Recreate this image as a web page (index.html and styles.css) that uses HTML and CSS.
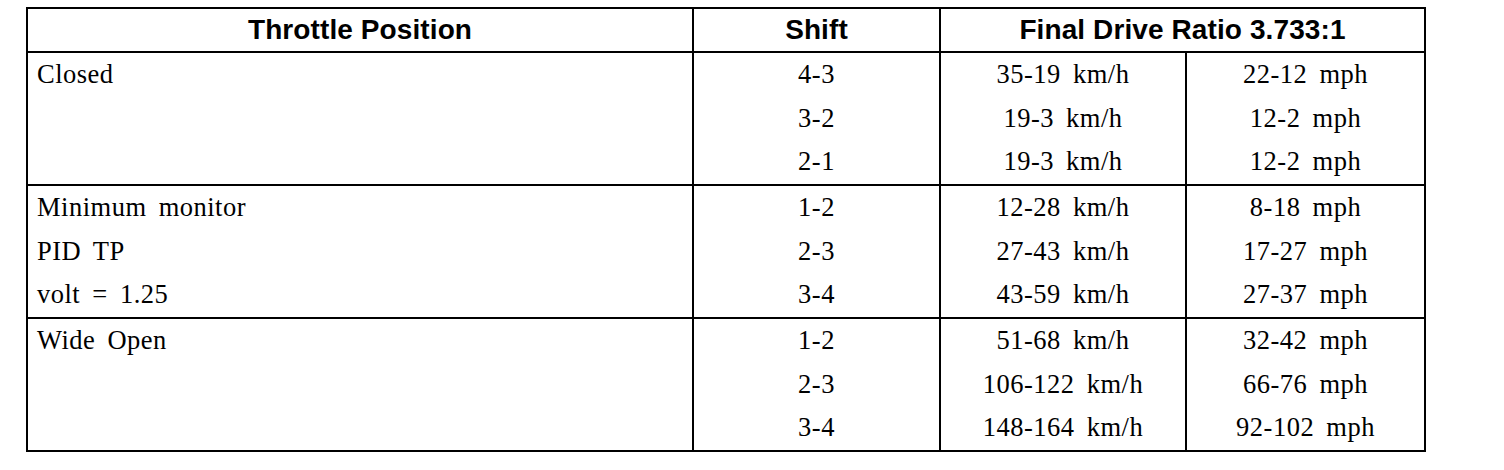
FILE: index.html
```html
<!DOCTYPE html>
<html>
<head>
<meta charset="utf-8">
<link rel="stylesheet" href="styles.css">
</head>
<body>
<div class="tbl">
  <div class="hd">Throttle Position</div>
  <div class="hd sep">Shift</div>
  <div class="hd sep span2">Final Drive Ratio 3.733:1</div>

  <div class="cell left top"><div class="ln">Closed</div></div>
  <div class="cell sep top"><div class="ln">4-3</div><div class="ln">3-2</div><div class="ln">2-1</div></div>
  <div class="cell sep top"><div class="ln">35-19 km/h</div><div class="ln">19-3 km/h</div><div class="ln">19-3 km/h</div></div>
  <div class="cell sep top"><div class="ln">22-12 mph</div><div class="ln">12-2 mph</div><div class="ln">12-2 mph</div></div>

  <div class="cell left top"><div class="ln">Minimum monitor</div><div class="ln">PID TP</div><div class="ln">volt = 1.25</div></div>
  <div class="cell sep top"><div class="ln">1-2</div><div class="ln">2-3</div><div class="ln">3-4</div></div>
  <div class="cell sep top"><div class="ln">12-28 km/h</div><div class="ln">27-43 km/h</div><div class="ln">43-59 km/h</div></div>
  <div class="cell sep top"><div class="ln">8-18 mph</div><div class="ln">17-27 mph</div><div class="ln">27-37 mph</div></div>

  <div class="cell left top"><div class="ln">Wide Open</div></div>
  <div class="cell sep top"><div class="ln">1-2</div><div class="ln">2-3</div><div class="ln">3-4</div></div>
  <div class="cell sep top"><div class="ln">51-68 km/h</div><div class="ln">106-122 km/h</div><div class="ln">148-164 km/h</div></div>
  <div class="cell sep top"><div class="ln">32-42 mph</div><div class="ln">66-76 mph</div><div class="ln">92-102 mph</div></div>
</div>
</body>
</html>
```

FILE: styles.css
```css
html, body {
  margin: 0;
  padding: 0;
  background: #fff;
}
body {
  padding: 7px 0 0 26px;
  color: #000;
}
.tbl {
  display: grid;
  grid-template-columns: 664px 247px 246px 239px;
  width: 1396px;
  border: 2px solid #000;
}
.hd {
  height: 42px;
  line-height: 42px;
  text-align: center;
  font-family: "Liberation Sans", Arial, sans-serif;
  font-weight: bold;
  font-size: 28px;
  letter-spacing: 0.1px;
}
.span2 {
  grid-column: span 2;
}
.sep {
  border-left: 2px solid #000;
}
.top {
  border-top: 2px solid #000;
}
.cell {
  height: 131px;
  font-family: "Liberation Serif", "Times New Roman", serif;
  font-size: 26.5px;
  text-align: center;
  letter-spacing: 0.5px;
  word-spacing: 5px;
}
.cell.left {
  text-align: left;
  padding-left: 9px;
}
.ln {
  height: 43.67px;
  line-height: 43.67px;
  white-space: nowrap;
}
```
